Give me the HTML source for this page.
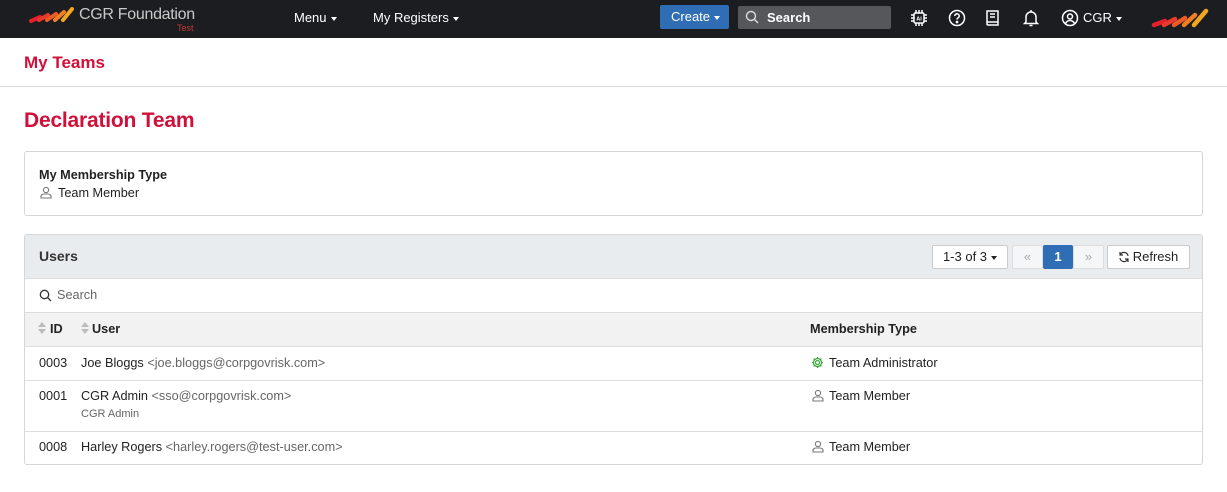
<!DOCTYPE html>
<html><head><style>
*{box-sizing:border-box;margin:0;padding:0}
body{width:1227px;height:492px;background:#fff;font-family:"Liberation Sans",Arial,sans-serif;font-size:13px;color:#222;position:relative;overflow:hidden}
.nav{position:absolute;left:0;top:0;width:1227px;height:38px;background:#1c1d20;color:#fff}
.a{position:absolute}
.red{color:#d0103a}
.caret{display:inline-block;border-top:4px solid currentColor;border-left:3.5px solid transparent;border-right:3.5px solid transparent;vertical-align:middle;margin-left:4px}
.ic{position:absolute;top:9px}
.box{position:absolute;left:24px;width:1179px;border:1px solid #d6d6d6;border-radius:3px}
.row{position:absolute;left:0;width:100%;border-top:1px solid #ddd}
.gray{color:#666}
.t{font-size:12.7px}
.btn{position:absolute;top:10px;height:24px;border:1px solid #ccc;background:#fff;border-radius:2px;font-size:13px;line-height:22px;text-align:center}
</style></head><body>
<div class="nav">
 <svg class="a" style="left:28px;top:6px" width="50" height="18" viewBox="0 0 50 18"><g stroke-width="4" stroke-linecap="round" fill="none"><path d="M3 15 L12 11" stroke="#e4202b"/><path d="M11 14 L20 9" stroke="#e83a2a"/><path d="M19 14 L28 8" stroke="#ec5a28"/><path d="M27 14 L36 6" stroke="#f07e22"/><path d="M35 14 L44 3" stroke="#f4a61e"/></g></svg>
 <div class="a" style="left:79px;top:6px;font-size:16px;letter-spacing:-0.3px;color:#c9c9c9">CGR Foundation</div>
 <div class="a" style="left:177px;top:23px;font-size:9px;color:#c23a33">Test</div>
 <div class="a" style="left:294px;top:10px;font-size:13px">Menu<span class="caret"></span></div>
 <div class="a" style="left:373px;top:10px;font-size:13px">My Registers<span class="caret"></span></div>
 <div class="a" style="left:660px;top:5px;width:69px;height:24px;background:#2f6db5;border-radius:2px;font-size:13px;line-height:24px;padding-left:11px">Create<span class="caret"></span></div>
 <div class="a" style="left:738px;top:6px;width:153px;height:23px;background:#55575a;border-radius:2px;font-size:13px;font-weight:bold;line-height:23px;padding-left:29px">Search</div>
 <svg class="a" style="left:745px;top:10px" width="14" height="14" viewBox="0 0 14 14" fill="none" stroke="#ddd" stroke-width="1.4"><circle cx="6" cy="6" r="4.5"/><path d="M9.5 9.5L13 13"/></svg>
 <svg class="ic" style="left:910px" width="18" height="18" viewBox="0 0 18 18" fill="none" stroke="#fff" stroke-width="1.5"><rect x="4" y="4" width="10" height="10" rx="1.5"/><path d="M6 1v3M9 1v3M12 1v3M6 14v3M9 14v3M12 14v3M1 6h3M1 9h3M1 12h3M14 6h3M14 9h3M14 12h3"/><text x="9" y="11.5" font-size="5.5" fill="#fff" stroke="none" text-anchor="middle" font-family="Liberation Sans" font-weight="bold">AI</text></svg>
 <svg class="ic" style="left:948px" width="18" height="18" viewBox="0 0 18 18" fill="none" stroke="#fff" stroke-width="1.5"><circle cx="9" cy="9" r="7.5"/><path d="M6.8 7a2.2 2.2 0 1 1 3 2c-.6.3-.8.7-.8 1.5"/><circle cx="9" cy="13" r=".6" fill="#fff"/></svg>
 <svg class="ic" style="left:985px" width="16" height="18" viewBox="0 0 16 18" fill="none" stroke="#fff" stroke-width="1.5"><path d="M2 2h11v14H3a1 1 0 0 1-1-1zM2 13h11M5 5h5M5 8h5"/></svg>
 <svg class="ic" style="left:1023px" width="16" height="18" viewBox="0 0 16 18" fill="none" stroke="#fff" stroke-width="1.5"><path d="M3 13V8a5 5 0 0 1 10 0v5l1.5 1.5h-13zM6.5 16.5h3M8 1v2"/></svg>
 <svg class="ic" style="left:1061px" width="18" height="18" viewBox="0 0 18 18" fill="none" stroke="#fff" stroke-width="1.5"><circle cx="9" cy="9" r="7.5"/><circle cx="9" cy="7.5" r="2.5"/><path d="M4.5 14.5c1-2 2.5-3 4.5-3s3.5 1 4.5 3"/></svg>
 <div class="a" style="left:1083px;top:10px;font-size:13px">CGR<span class="caret"></span></div>
 <svg class="a" style="left:1150px;top:7px" width="62" height="22" viewBox="0 0 62 22"><g stroke-width="4.5" stroke-linecap="round" fill="none"><path d="M4 18 L15 14" stroke="#e4202b"/><path d="M14 18 L25 12" stroke="#e83a2a"/><path d="M24 18 L35 11" stroke="#ec5a28"/><path d="M34 18 L45 8" stroke="#f07e22"/><path d="M44 18 L56 4" stroke="#f4a61e"/></g></svg>
</div>
<div class="a red" style="left:24px;top:53px;font-size:17px;font-weight:bold">My Teams</div>
<div class="a" style="left:0;top:86px;width:1227px;border-top:1px solid #d6d6d6"></div>
<div class="a red" style="left:24px;top:109px;font-size:21px;font-weight:bold;letter-spacing:-0.2px">Declaration Team</div>
<div class="box t" style="top:151px;height:65px">
 <div class="a" style="left:14px;top:16px;font-weight:bold">My Membership Type</div>
 <svg class="a" style="left:15px;top:34px" width="12" height="13" viewBox="0 0 12 13" fill="none" stroke="#777" stroke-width="1.1"><circle cx="6" cy="4" r="2.6"/><path d="M1 12v-1.5C1 9 2.5 8 4 8h4c1.5 0 3 1 3 2.5V12z"/></svg>
 <div class="a" style="left:33px;top:34px">Team Member</div>
</div>
<div class="box t" style="top:234px;height:231px;overflow:hidden">
 <div class="a" style="left:0;top:0;width:100%;height:43px;background:#e9ecef"></div>
 <div class="a" style="left:14px;top:13px;font-size:14px;font-weight:bold;color:#333">Users</div>
 <div class="btn" style="left:907px;width:76px">1-3 of 3<span class="caret"></span></div>
 <div class="btn" style="left:987px;width:31px;background:#f5f6f7;color:#aaa;border-color:#ddd">&laquo;</div>
 <div class="btn" style="left:1018px;width:30px;background:#2f6db5;color:#fff;border-color:#2f6db5;font-weight:bold">1</div>
 <div class="btn" style="left:1048px;width:31px;background:#f5f6f7;color:#aaa;border-color:#ddd">&raquo;</div>
 <div class="btn" style="left:1082px;width:83px;padding-left:14px">Refresh</div>
 <svg class="a" style="left:1093px;top:16px" width="12" height="12" viewBox="0 0 12 12" fill="none" stroke="#333" stroke-width="1.2"><path d="M10 5A4 4 0 0 0 2.5 3.5M2 7a4 4 0 0 0 7.5 1.5M2 1v3h3M10 11V8H7"/></svg>
 <div class="row" style="top:43px;height:35px"></div>
 <svg class="a" style="left:14px;top:54px" width="13" height="13" viewBox="0 0 13 13" fill="none" stroke="#333" stroke-width="1.3"><circle cx="5.5" cy="5.5" r="4.2"/><path d="M8.7 8.7L12 12"/></svg>
 <div class="a gray" style="left:32px;top:53px">Search</div>
 <div class="row" style="top:77px;height:34px;background:#f2f2f2"></div>
 <svg class="a" style="left:13px;top:87px" width="8" height="12" viewBox="0 0 8 12" fill="#bbb"><path d="M4 0L8 5H0zM4 12L0 7h8z"/></svg>
 <div class="a" style="left:25px;top:87px;font-weight:bold">ID</div>
 <svg class="a" style="left:56px;top:87px" width="8" height="12" viewBox="0 0 8 12" fill="#bbb"><path d="M4 0L8 5H0zM4 12L0 7h8z"/></svg>
 <div class="a" style="left:67px;top:87px;font-weight:bold">User</div>
 <div class="a" style="left:785px;top:87px;font-weight:bold">Membership Type</div>
 <div class="row" style="top:111px"></div>
 <div class="a" style="left:14px;top:121px">0003</div>
 <div class="a" style="left:56px;top:121px">Joe Bloggs <span class="gray">&lt;joe.bloggs@corpgovrisk.com&gt;</span></div>
 <svg class="a" style="left:786px;top:121px" width="13" height="13" viewBox="0 0 13 13" fill="none" stroke="#3aa53a" stroke-width="1.2"><circle cx="6.5" cy="6.5" r="2"/><path d="M6.5 1v2M6.5 10v2M1 6.5h2M10 6.5h2M2.6 2.6l1.4 1.4M9 9l1.4 1.4M2.6 10.4L4 9M9 4l1.4-1.4"/><circle cx="6.5" cy="6.5" r="4"/></svg>
 <div class="a" style="left:804px;top:121px">Team Administrator</div>
 <div class="row" style="top:145px"></div>
 <div class="a" style="left:14px;top:154px">0001</div>
 <div class="a" style="left:56px;top:154px">CGR Admin <span class="gray">&lt;sso@corpgovrisk.com&gt;</span></div>
 <div class="a gray" style="left:56px;top:173px;font-size:11px">CGR Admin</div>
 <svg class="a" style="left:787px;top:154px" width="12" height="13" viewBox="0 0 12 13" fill="none" stroke="#777" stroke-width="1.1"><circle cx="6" cy="4" r="2.6"/><path d="M1 12v-1.5C1 9 2.5 8 4 8h4c1.5 0 3 1 3 2.5V12z"/></svg>
 <div class="a" style="left:804px;top:154px">Team Member</div>
 <div class="row" style="top:196px"></div>
 <div class="a" style="left:14px;top:205px">0008</div>
 <div class="a" style="left:56px;top:205px">Harley Rogers <span class="gray">&lt;harley.rogers@test-user.com&gt;</span></div>
 <svg class="a" style="left:787px;top:205px" width="12" height="13" viewBox="0 0 12 13" fill="none" stroke="#777" stroke-width="1.1"><circle cx="6" cy="4" r="2.6"/><path d="M1 12v-1.5C1 9 2.5 8 4 8h4c1.5 0 3 1 3 2.5V12z"/></svg>
 <div class="a" style="left:804px;top:205px">Team Member</div>
</div>
</body></html>
